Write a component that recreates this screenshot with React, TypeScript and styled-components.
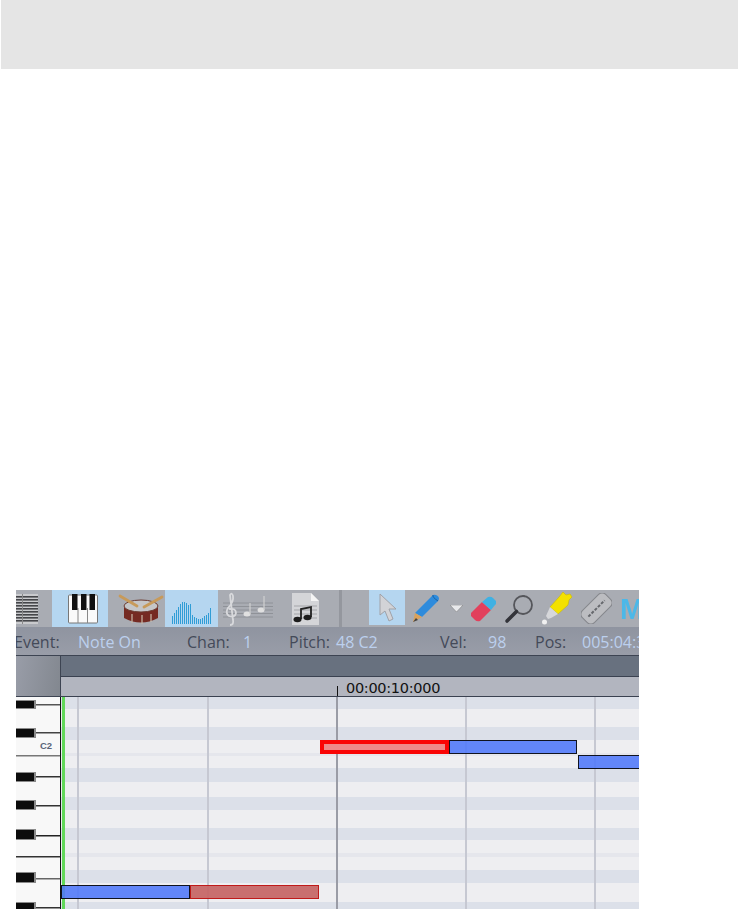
import React from 'react';
import styled, { createGlobalStyle } from 'styled-components';

const GlobalStyle = createGlobalStyle`
  html, body {
    margin: 0;
    padding: 0;
    height: 909px;
    overflow: hidden;
    background: #fff;
    font-family: "Open Sans", "Liberation Sans", sans-serif;
  }
`;

const BLACK_KEYS = [
  [3, 9], [31, 10], [75, 10], [103, 10], [132, 11], [175, 11], [205, 10],
];
const KEY_LINES = [
  [7, 20, '#555'], [35, 20, '#444'], [58, 0, '#777'], [79, 20, '#333'], [108, 20, '#333'],
  [138, 20, '#222'], [159, 0, '#333'], [181, 20, '#666'], [210, 20, '#333'],
] as const;
const BANDS: ['dark' | 'light' | 'faint', number][] = [
  ['dark', 12], ['light', 18], ['dark', 13], ['light', 13], ['faint', 3], ['light', 12],
  ['dark', 14], ['light', 15], ['dark', 13], ['light', 18], ['dark', 12], ['light', 13],
  ['faint', 4], ['light', 13], ['dark', 13], ['light', 19], ['dark', 8],
];
const BAND_COLORS = { dark: '#dce0e9', light: '#eeeef1', faint: '#e5e6ec' };
const GRID_LINES = [
  { x: 16, strong: false }, { x: 146, strong: false }, { x: 275, strong: true },
  { x: 404, strong: false }, { x: 533, strong: false },
];
const WAVE_BARS = [8, 11, 14, 17, 20, 22, 22, 21, 19, 20, 9, 7, 6, 5, 5, 6, 8, 9, 11, 16];

const App: React.FC = () => {
  return (
    <Page>
      <GlobalStyle />
      <TopBanner />
      <ShotClip>
        <Shot>
          <Toolbar>
            <ToolSlot $w={22}><ListIcon /></ToolSlot>
            <ToolSlot $w={14} />
            <ToolSlot $w={56} $pl={5} $active><PianoIcon /></ToolSlot>
            <ToolSlot $w={57} $pl={8}><DrumIcon /></ToolSlot>
            <ToolSlot $w={53} $active><WaveIcon /></ToolSlot>
            <ToolSlot $w={60}><ScoreIcon /></ToolSlot>
            <ToolSlot $w={54}><DocIcon /></ToolSlot>
            <ToolSlot $w={7} />
            <ToolDivider />
            <ToolSlot $w={27} />
            <ToolSlot $w={36} $active $short><ArrowIcon /></ToolSlot>
            <ToolSlot $w={42}><PencilIcon /></ToolSlot>
            <ToolSlot $w={19}><DropIcon /></ToolSlot>
            <ToolSlot $w={34}><EraserIcon /></ToolSlot>
            <ToolSlot $w={38}><LensIcon /></ToolSlot>
            <ToolSlot $w={38}><MarkerIcon /></ToolSlot>
            <ToolSlot $w={38} $pl={3}><RazorIcon /></ToolSlot>
            <ToolSlot $w={6} />
            <BigLetter>M</BigLetter>
          </Toolbar>
          <StatusBar>
            <Label $w={64}>Event:</Label>
            <Value $w={109}>Note On</Value>
            <Label $w={56}>Chan:</Label>
            <Value $w={46}>1</Value>
            <Label $w={47}>Pitch:</Label>
            <Value $w={104}>48 C2</Value>
            <Label $w={48}>Vel:</Label>
            <Value $w={47}>98</Value>
            <Label $w={47}>Pos:</Label>
            <Value $w={80}>005:04:3</Value>
          </StatusBar>
          <Body>
            <KeyColumn>
              <KeyHeader />
              <Keyboard />
            </KeyColumn>
            <RollColumn>
              <OverviewBar />
              <Ruler>
                <RulerTick />
                <RulerTime>00:00:10:000</RulerTime>
              </Ruler>
              <Roll>
                {BANDS.map(([tone, height], i) => (
                  <Band key={i} $tone={tone} $h={height} />
                ))}
                <PlayHead />
                {GRID_LINES.map((line) => (
                  <GridLine key={line.x} $x={line.x} $strong={line.strong} />
                ))}
                <Note $x={0} $y={188} $w={129} $h={14} />
                <NoteMuted $x={129} $y={188} $w={129} $h={14} />
                <NoteSelected $x={259} $y={43} $w={129} $h={14} />
                <Note $x={388} $y={43} $w={128} $h={14} />
                <Note $x={517} $y={58} $w={70} $h={14} />
              </Roll>
            </RollColumn>
          </Body>
        </Shot>
      </ShotClip>
    </Page>
  );
};

export default App;

const ListIcon = () => (
  <svg width="22" height="30" viewBox="0 0 22 30">
    <rect width="22" height="30" fill="#c9cacd" />
    {[2, 5, 8, 11, 14, 17, 20, 23, 26].map((y) => (
      <rect key={y} y={y} width="22" height="1.6" fill="#45464a" />
    ))}
    <rect x="6" width="1" height="30" fill="#888" />
  </svg>
);

const PianoIcon = () => (
  <svg width="30" height="30" viewBox="0 0 30 30">
    <rect x="0.5" y="1" width="29" height="28" rx="1" fill="#fafafa" stroke="#777" />
    <path d="M10 14v15M19.5 14v15" stroke="#888" strokeWidth="1" />
    <rect x="4" y="0" width="5.5" height="16" fill="#111" />
    <rect x="13" y="0" width="5.5" height="16" fill="#111" />
    <rect x="21.5" y="0" width="5.5" height="16" fill="#111" />
  </svg>
);

const DrumIcon = () => (
  <svg width="46" height="32" viewBox="0 0 46 32">
    <path d="M6 13v12q17 9 34 0V13z" fill="#752a22" />
    <path d="M14 21v9M24 22v9M33 21v8" stroke="#c9b9a8" strokeWidth="1.2" />
    <ellipse cx="23" cy="13" rx="17" ry="6" fill="#c5c6c8" stroke="#6b3a30" />
    <path d="M2 3l17 10M44 4L26 14" stroke="#c79a5a" strokeWidth="2.8" strokeLinecap="round" />
  </svg>
);

const WaveIcon = () => (
  <WaveBars>
    {WAVE_BARS.map((height, i) => (
      <WaveBar key={i} style={{ height }} />
    ))}
  </WaveBars>
);

const ScoreIcon = () => (
  <svg width="50" height="34" viewBox="0 0 50 34">
    {[11, 14.5, 18, 21.5, 25].map((y) => (
      <path key={y} d={`M0 ${y}h50`} stroke="#8f9298" strokeWidth="1" />
    ))}
    <path d="M7 33q4 0 3-5L7 3q2-3 3 1 1 6-5 12-3 5 1 8 6 2 7-3 0-5-7-4" fill="none" stroke="#d8d9dc" strokeWidth="1.8" />
    <ellipse cx="24" cy="22" rx="3.5" ry="2.5" fill="#e0e0e0" />
    <ellipse cx="38" cy="18" rx="3.5" ry="2.5" fill="#e0e0e0" />
    <path d="M27 22V11M41 18V4" stroke="#d0d0d0" strokeWidth="1.2" />
  </svg>
);

const DocIcon = () => (
  <svg width="27" height="32" viewBox="0 0 27 32">
    <path d="M0 0h19l8 8v24H0z" fill="#d4d5d8" />
    <path d="M19 0l8 8h-8z" fill="#f4f4f4" />
    <path d="M2 13h23M2 17h23M2 21h23M2 25h23" stroke="#a4a5a9" strokeWidth="1" />
    <path d="M9 26V16l10-2v10" fill="none" stroke="#222" strokeWidth="1.8" />
    <ellipse cx="5.5" cy="26.5" rx="4" ry="2.8" fill="#1c1c1c" />
    <ellipse cx="15.5" cy="24.5" rx="4" ry="2.8" fill="#1c1c1c" />
  </svg>
);

const ArrowIcon = () => (
  <svg width="19" height="30" viewBox="0 0 19 30">
    <path d="M2 1v21l5-4 4 10 4-2-4-10h7z" fill="#d2d3d7" stroke="#a0a2a8" strokeWidth="1" />
  </svg>
);

const PencilIcon = () => (
  <svg width="28" height="29" viewBox="0 0 28 29">
    <path d="M21 1q4-1 6 3 0 2-1 3L10 23 3 19z" fill="#2e8bdc" />
    <path d="M21 1q-1 2 5 6" fill="none" stroke="#1a5e9e" strokeWidth="1" />
    <path d="M3 19l7 4-9 5z" fill="#d9a25c" />
    <path d="M1 28l3-4 2 2z" fill="#444" />
  </svg>
);

const DropIcon = () => (
  <svg width="13" height="7" viewBox="0 0 13 7">
    <path d="M0 0h13L6.5 7z" fill="#e8e9ec" stroke="#777" strokeWidth="0.5" />
  </svg>
);

const EraserIcon = () => (
  <svg width="26" height="26" viewBox="0 0 26 26">
    <path d="M1 17L12 6l9 8L10 25q-3 1-5-1l-4-4z" fill="#e2405c" />
    <path d="M12 6l6-5q3-1 5 1l3 3q1 2-1 4l-4 5z" fill="#3fb1e3" />
  </svg>
);

const LensIcon = () => (
  <svg width="30" height="30" viewBox="0 0 30 30">
    <circle cx="19" cy="11" r="9" fill="none" stroke="#55565b" strokeWidth="1.8" />
    <path d="M12.5 17.5L3 27" stroke="#33343a" strokeWidth="3.6" strokeLinecap="round" />
  </svg>
);

const MarkerIcon = () => (
  <svg width="31" height="33" viewBox="0 0 31 33">
    <path d="M21 0l3 3 4-1 2 3-3 3-1 5-10 9-8-7 9-10z" fill="#f3e100" stroke="#c9b800" strokeWidth="0.6" />
    <path d="M8 15l8 7-7 4-3 1-2-3z" fill="#d6d7da" />
    <circle cx="2.5" cy="30" r="2.5" fill="#f0f0f0" />
  </svg>
);

const RazorIcon = () => (
  <svg width="31" height="31" viewBox="0 0 31 31">
    <g transform="rotate(-45 15.5 15.5)">
      <rect x="-1" y="7" width="33" height="17" rx="5" fill="#bcbdc1" stroke="#85878c" />
      <path d="M4 15.5h23" stroke="#66686d" strokeWidth="2" strokeDasharray="3 1.5" />
    </g>
  </svg>
);

const Keyboard = () => (
  <KeyboardSvg width="45" height="213" viewBox="0 0 45 213">
    <rect width="45" height="213" fill="#f8f8f8" />
    {KEY_LINES.map(([y, x, color]) => (
      <rect key={y} x={x} y={y} width={45 - x} height="1.5" fill={color} />
    ))}
    {BLACK_KEYS.map(([y, h]) => (
      <g key={y}>
        <rect x="0" y={y} width="20" height={h} fill="#8a8a8a" />
        <rect x="0" y={y + 1} width="18" height={h - 2} fill="#0c0c0c" />
      </g>
    ))}
    <text x="24" y="52" fontSize="9.5" fontWeight="bold" fontFamily="Liberation Sans" fill="#5a6478">C2</text>
    <rect x="44" width="1.5" height="213" fill="#111" />
  </KeyboardSvg>
);

const Page = styled.div`
  display: flex;
  flex-direction: column;
  width: 738px;
  height: 909px;
`;

const TopBanner = styled.div`
  height: 69px;
  margin-left: 1px;
  background: #e5e5e5;
`;

const ShotClip = styled.div`
  width: 623px;
  height: 319px;
  margin: 521px 0 0 16px;
  overflow: hidden;
`;

const Shot = styled.div`
  display: flex;
  flex-direction: column;
  height: 319px;
  filter: blur(0.45px);
`;

const Toolbar = styled.div`
  display: flex;
  flex: none;
  height: 37px;
  background: #a9acb3;
  filter: blur(0.4px);
`;

const ToolSlot = styled.div<{ $w: number; $pl?: number; $active?: boolean; $short?: boolean }>`
  display: flex;
  flex: none;
  align-items: center;
  justify-content: center;
  box-sizing: border-box;
  width: ${(p) => p.$w}px;
  height: ${(p) => (p.$short ? 35 : 37)}px;
  padding-left: ${(p) => p.$pl ?? 0}px;
  background: ${(p) => (p.$active ? '#b5d6f0' : 'transparent')};
`;

const ToolDivider = styled.div`
  flex: none;
  width: 3px;
  background: #94979e;
`;

const WaveBars = styled.div`
  display: flex;
  align-items: flex-end;
  gap: 0.4px;
  height: 23px;
  margin-top: 8px;
`;

const WaveBar = styled.div`
  width: 1.6px;
  background: #2f9dd6;
`;

const BigLetter = styled.div`
  flex: none;
  margin-top: 1px;
  color: #4cb8e8;
  font: bold 29px/36px "Liberation Sans", sans-serif;
`;

const StatusBar = styled.div`
  display: flex;
  flex: none;
  align-items: center;
  box-sizing: border-box;
  height: 29px;
  margin-left: -2px;
  padding-top: 2px;
  border-bottom: 1px solid #3d4452;
  background: linear-gradient(#8f94a0, #999da8);
  font-size: 16px;
  white-space: nowrap;
  overflow: hidden;
`;

const Label = styled.span<{ $w: number }>`
  flex: none;
  width: ${(p) => p.$w}px;
  color: #444a59;
`;

const Value = styled.span<{ $w: number }>`
  flex: none;
  width: ${(p) => p.$w}px;
  color: #bcd0ee;
`;

const Body = styled.div`
  display: flex;
  flex: 1;
  min-height: 0;
`;

const KeyColumn = styled.div`
  display: flex;
  flex: none;
  flex-direction: column;
  width: 45px;
`;

const KeyHeader = styled.div`
  flex: none;
  height: 41px;
  border-right: 1px solid #3d4452;
  border-bottom: 1px solid #3d4452;
  box-sizing: border-box;
  background: linear-gradient(100deg, #999da8, #82878f);
`;

const KeyboardSvg = styled.svg`
  display: block;
  flex: none;
`;

const RollColumn = styled.div`
  display: flex;
  flex: 1;
  flex-direction: column;
  min-width: 0;
`;

const OverviewBar = styled.div`
  flex: none;
  height: 20px;
  border-bottom: 1px solid #3a4150;
  background: #68717f;
`;

const Ruler = styled.div`
  position: relative;
  display: flex;
  flex: none;
  align-items: flex-end;
  box-sizing: border-box;
  height: 20px;
  padding-left: 285px;
  border-bottom: 1px solid #3a4150;
  background: #b2b5bf;
`;

const RulerTick = styled.div`
  position: absolute;
  left: 276px;
  bottom: 0;
  width: 1px;
  height: 10px;
  background: #111;
`;

const RulerTime = styled.span`
  color: #111;
  font: 14.5px/16px "DejaVu Sans", sans-serif;
  letter-spacing: -0.3px;
`;

const Roll = styled.div`
  position: relative;
  flex: 1;
  overflow: hidden;
`;

const Band = styled.div<{ $tone: 'dark' | 'light' | 'faint'; $h: number }>`
  height: ${(p) => p.$h}px;
  background: ${(p) => BAND_COLORS[p.$tone]};
`;

const PlayHead = styled.div`
  position: absolute;
  left: 1px;
  top: 0;
  bottom: 0;
  width: 3px;
  background: #62d85a;
`;

const GridLine = styled.div<{ $x: number; $strong: boolean }>`
  position: absolute;
  left: ${(p) => p.$x}px;
  top: 0;
  bottom: 0;
  width: 1.5px;
  background: ${(p) => (p.$strong ? '#9a9ca6' : '#c6c8d2')};
`;

const Note = styled.div<{ $x: number; $y: number; $w: number; $h: number }>`
  position: absolute;
  left: ${(p) => p.$x}px;
  top: ${(p) => p.$y}px;
  box-sizing: border-box;
  width: ${(p) => p.$w}px;
  height: ${(p) => p.$h}px;
  border: 1.5px solid #10131f;
  background: rgba(82, 122, 250, 0.9);
`;

const NoteMuted = styled(Note)`
  border-color: #c01a1a;
  background: rgba(198, 100, 100, 0.92);
`;

const NoteSelected = styled(Note)`
  border: 4px solid #fa0505;
  background: #ee8a8a;
`;
